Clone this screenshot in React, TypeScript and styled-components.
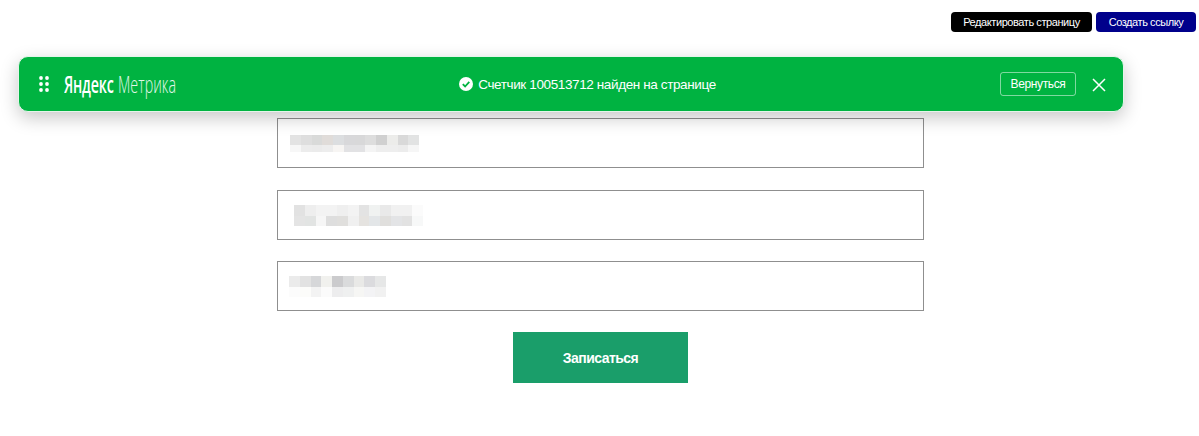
import React from "react";
import styled, { createGlobalStyle } from "styled-components";

const Global = createGlobalStyle`
  html, body { margin: 0; padding: 0; background: #fff; }
  body { font-family: "Liberation Sans", Arial, sans-serif; overflow: hidden; }
`;

const Page = styled.div`
  position: relative;
  width: 1199px;
  height: 436px;
`;

const TopBar = styled.div`
  display: flex;
  justify-content: flex-end;
  gap: 4px;
  padding: 12px 3px 0 0;
  height: 20px;
`;

const TopButton = styled.button<{ $bg: string; $w: number }>`
  width: ${(p) => p.$w}px;
  height: 20px;
  padding: 0;
  border: 0;
  border-radius: 4px;
  background: ${(p) => p.$bg};
  color: #fff;
  font: 11px "Liberation Sans", Arial, sans-serif;
  letter-spacing: -0.42px;
  text-align: center;
`;

const Panel = styled.div`
  position: absolute;
  left: 18px;
  top: 56px;
  width: 1104px;
  height: 54px;
  display: flex;
  align-items: center;
  background: #00b341;
  border: 1px solid #e4f5ea;
  border-radius: 10px;
  box-shadow: 0 6px 18px rgba(0, 0, 0, 0.22);
  color: #fff;
`;

const Grip = styled.svg`
  flex: none;
  margin-left: 20px;
  width: 10px;
  height: 16px;
`;

const Logo = styled.div`
  flex: none;
  width: 110px;
  margin-left: 15px;
  height: 24px;
  display: flex;
  align-items: center;
  white-space: nowrap;
  font: 23px "Open Sans", sans-serif;
  transform: scaleX(0.62);
  transform-origin: left center;
  letter-spacing: -0.3px;
`;

const LogoBold = styled.span`
  font-weight: 600;
  margin-right: 7px;
`;

const LogoLight = styled.span`
  font-weight: 300;
  letter-spacing: 0.1px;
  color: #e2f7ea;
`;

const Message = styled.div`
  flex: 1;
  display: flex;
  align-items: center;
  justify-content: center;
  gap: 5px;
  font-size: 13.5px;
  letter-spacing: -0.38px;
  padding-left: 1px;
`;

const Back = styled.button`
  flex: none;
  width: 76px;
  height: 24px;
  padding: 0;
  border: 1px solid rgba(255, 255, 255, 0.5);
  border-radius: 3px;
  background: transparent;
  color: #fff;
  font: 12px "Liberation Sans", Arial, sans-serif;
  letter-spacing: -0.38px;
`;

const Close = styled.svg`
  flex: none;
  width: 14px;
  height: 14px;
  margin: 1px 17px 0 16px;
`;

const Form = styled.div`
  display: flex;
  flex-direction: column;
  align-items: center;
  padding: 86px 0 0 2px;
`;

const Field = styled.div<{ $pad: number; $gap: number }>`
  box-sizing: border-box;
  width: 647px;
  height: 50px;
  margin-bottom: ${(p) => p.$gap}px;
  padding-left: ${(p) => p.$pad}px;
  display: flex;
  align-items: center;
  border: 1px solid #8f8f8f;
  background: #fff;
`;

const Blur = styled.div<{ $cols: number; $h1: number; $h2: number }>`
  display: grid;
  grid-template-columns: repeat(${(p) => p.$cols}, 10.75px);
  grid-template-rows: ${(p) => p.$h1}px ${(p) => p.$h2}px;
`;

const Submit = styled.button`
  width: 175px;
  height: 51px;
  border: 0;
  padding: 0;
  background: #1a9e6a;
  color: #fff;
  font: bold 14px "Liberation Sans", Arial, sans-serif;
  letter-spacing: -0.55px;
`;

const blur1 = [
  ["#e3e3e3", "#dedede", "#d9dad9", "#e0dcd9", "#dcdee0", "#d8d8da", "#d8d8d9", "#dddddd", "#d0d0d0", "#ececea", "#d9d9d9", "#e2e3e3"],
  ["#f7f7f7", "#ececec", "#ebebeb", "#ededed", "#f7f5f3", "#e2e2e4", "#e2e2e4", "#f4f4f4", "#eeeeee", "#eeeeee", "#ececec", "#f6f6f6"],
];
const blur2 = [
  ["#e2e2e2", "#eeeeee", "#f3f3f3", "#f3f3f3", "#efefef", "#f3f3f3", "#e3e3e3", "#f0f2f1", "#e9e9e9", "#f1f1f1", "#f1f1f1", "#fbfbfb"],
  ["#e4e4e4", "#e2e4e3", "#f6f6f6", "#dedede", "#e0dfdd", "#f0f0f0", "#e5e3e0", "#e3e6e8", "#e0dfdd", "#e3e4e6", "#e2e2e2", "#f7f8f8"],
];
const blur3 = [
  ["#ebebeb", "#e2e2e2", "#d6d7d9", "#f1f1ee", "#cbcbcd", "#dadbdc", "#e9e9e7", "#dbdbde", "#e6e7e7"],
  ["#fcfcfc", "#fcfcfa", "#f3f3f3", "#fbfbfb", "#ededee", "#eff0f0", "#f6f6f4", "#f3f3f5", "#f1f1f1"],
];

const Cells = ({ rows, h1, h2 }: { rows: string[][]; h1: number; h2: number }) => (
  <Blur $cols={rows[0].length} $h1={h1} $h2={h2}>
    {rows.flat().map((c, i) => (
      <div key={i} style={{ background: c }} />
    ))}
  </Blur>
);

export default function App() {
  return (
    <Page>
      <Global />
      <TopBar>
        <TopButton $bg="#000" $w={141}>Редактировать страницу</TopButton>
        <TopButton $bg="#00008b" $w={100}>Создать ссылку</TopButton>
      </TopBar>
      <Form>
        <Field $pad={12} $gap={22}><Cells rows={blur1} h1={10} h2={7} /></Field>
        <Field $pad={16} $gap={21}><Cells rows={blur2} h1={11} h2={10} /></Field>
        <Field $pad={11} $gap={21}><Cells rows={blur3} h1={11} h2={10} /></Field>
        <Submit>Записаться</Submit>
      </Form>
      <Panel>
        <Grip viewBox="0 0 10 16">
          {[2, 8, 14].flatMap((y) =>
            [2, 8].map((x) => <circle key={`${x}-${y}`} cx={x} cy={y} r={1.9} fill="#fff" />)
          )}
        </Grip>
        <Logo>
          <LogoBold>Яндекс</LogoBold>
          <LogoLight>Метрика</LogoLight>
        </Logo>
        <Message>
          <svg width="14" height="14" viewBox="0 0 14 14">
            <circle cx="7" cy="7" r="7" fill="#fff" />
            <path d="M3.8 7.2 6.1 9.5 10.3 4.9" fill="none" stroke="#00b341" strokeWidth="1.8" />
          </svg>
          Счетчик 100513712 найден на странице
        </Message>
        <Back>Вернуться</Back>
        <Close viewBox="0 0 14 14">
          <path d="M1 1 13 13M13 1 1 13" stroke="#fff" strokeWidth="1.5" fill="none" />
        </Close>
      </Panel>
    </Page>
  );
}
